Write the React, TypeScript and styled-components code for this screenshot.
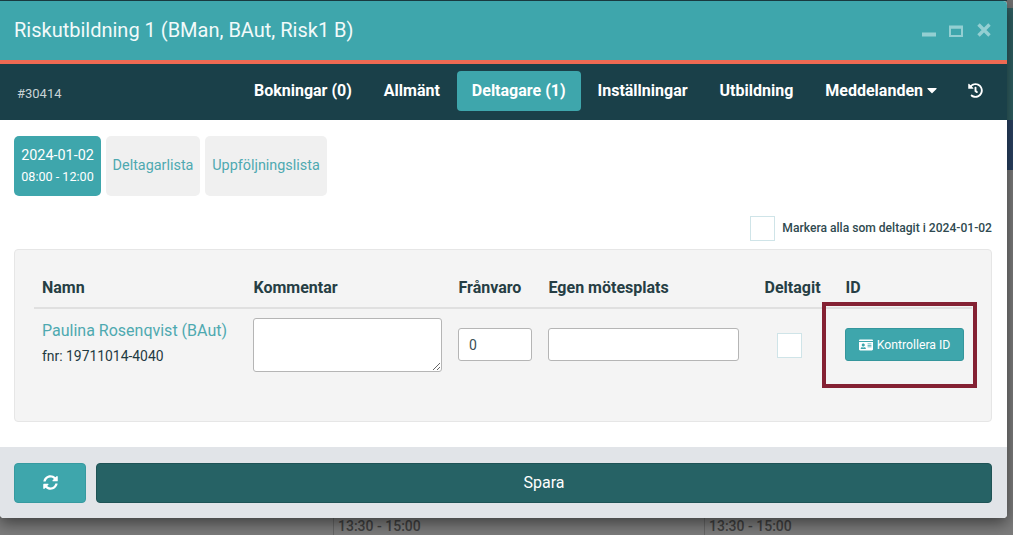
import React from "react";
import styled, { createGlobalStyle } from "styled-components";
import { FaCaretDown, FaHistory, FaIdCard, FaSyncAlt } from "react-icons/fa";

const Global = createGlobalStyle`
  html, body { margin: 0; padding: 0; height: 100%; overflow: hidden; }
  body { font-family: Roboto, "Liberation Sans", sans-serif; background: #787878; }
  * { box-sizing: border-box; }
`;

const Stage = styled.div`
  position: relative;
  width: 1013px;
  height: 535px;
  overflow: hidden;
  padding-top: 1px;
  background: linear-gradient(#1d4148 0, #1d4148 1px, #7c7c7c 1px);
`;

const SideStrip = styled.div<{ $top: number; $height: number; $color: string }>`
  position: absolute;
  right: 0;
  width: 6px;
  top: ${(p) => p.$top}px;
  height: ${(p) => p.$height}px;
  background: ${(p) => p.$color};
`;

const BackdropTime = styled.div<{ $left: number }>`
  position: absolute;
  left: ${(p) => p.$left}px;
  top: 517px;
  height: 18px;
  padding: 1px 0 0 4px;
  border-left: 1px solid #666;
  font-size: 14px;
  font-weight: 500;
  line-height: 16px;
  color: #404040;
`;

const Modal = styled.div`
  position: relative;
  width: 1007px;
  height: 517px;
  display: flex;
  flex-direction: column;
  border-radius: 0 4px 4px 4px;
  overflow: hidden;
  background: #fff;
  box-shadow: 0 5px 15px rgba(0, 0, 0, 0.5);
`;

const TitleBar = styled.header`
  height: 63px;
  flex: none;
  display: flex;
  align-items: center;
  justify-content: space-between;
  padding: 0 16px 1px 14px;
  background: #3ea6ac;
  border-bottom: 4px solid #ee6a53;
`;

const Title = styled.h1`
  margin: 0;
  font-size: 20px;
  font-weight: 400;
  line-height: 24px;
  color: #f2fafa;
`;

const WindowControls = styled.div`
  display: flex;
  align-items: flex-end;
  gap: 13px;
  svg { display: block; width: 14px; }
`;

const ControlIcon = styled.svg`
  fill: none;
  stroke: #93cfd2;
`;

const CloseIcon = styled(ControlIcon)`
  margin-left: 1px;
`;

const Nav = styled.nav`
  height: 56px;
  flex: none;
  display: flex;
  align-items: flex-start;
  padding: 7px 8px 0 17px;
  background: #1a4049;
`;

const CaseNumber = styled.span`
  margin-top: 15px;
  margin-right: auto;
  font-size: 13px;
  line-height: 15px;
  color: #c9d3d5;
`;

const NavItem = styled.a<{ $active?: boolean }>`
  height: 40px;
  display: flex;
  align-items: center;
  gap: 1px;
  margin: 0 ${(p) => (p.$active ? "1px" : "0")};
  padding: 0 ${(p) => (p.$active ? "15px" : "16px")} 2px;
  border-radius: 4px;
  font-size: 16px;
  font-weight: 700;
  line-height: 19px;
  color: #fff;
  background: ${(p) => (p.$active ? "#3ea6ac" : "transparent")};
  svg { display: block; }
`;

const Caret = styled(FaCaretDown)`
  margin-right: -4px;
`;

const Body = styled.main`
  flex: 1;
  display: flex;
  flex-direction: column;
  padding: 16px 15px 0 14px;
  background: #fff;
`;

const Tabs = styled.div`
  display: flex;
  gap: 5px;
`;

const Tab = styled.a<{ $active?: boolean; $width: number }>`
  width: ${(p) => p.$width}px;
  height: 60px;
  display: flex;
  flex-direction: column;
  align-items: center;
  justify-content: center;
  padding-bottom: ${(p) => (p.$active ? "0" : "2px")};
  border-radius: 5px;
  font-size: 14.4px;
  line-height: 21px;
  color: ${(p) => (p.$active ? "#fff" : "#4ea9b0")};
  background: ${(p) => (p.$active ? "#3ea6ac" : "#f0f0f0")};
`;

const TabTime = styled.span`
  font-size: 12.6px;
`;

const MarkRow = styled.div`
  height: 25px;
  margin-top: 20px;
  display: flex;
  align-items: center;
  justify-content: flex-end;
  gap: 7px;
  font-size: 12.1px;
  font-weight: 500;
  color: #2f4a50;
`;

const MarkLabel = styled.span`
  padding-bottom: 1px;
`;

const Check = styled.span`
  display: block;
  width: 25px;
  height: 25px;
  background: #fff;
  border: 1px solid #cfe4e8;
`;

const Panel = styled.section`
  height: 173px;
  margin-top: 8px;
  padding: 20px 19px 0;
  background: #f4f4f4;
  border: 1px solid #e6e6e6;
  border-radius: 4px;
`;

const TableGrid = styled.div`
  display: grid;
  grid-template-columns: 211px 205px 90px 216px 81px 135px;
`;

const HeadCell = styled.div`
  height: 39px;
  padding: 8px 8px 0 8.5px;
  border-bottom: 2px solid #e0e0e0;
  font-size: 16px;
  font-weight: 700;
  line-height: 19px;
  color: #263e44;
  &:first-child { padding-left: 8px; }
`;

const Cell = styled.div`
  padding: 9px 8px 0;
  min-height: 80px;
`;

const CenterCell = styled(Cell)`
  padding-top: 19px;
`;

const PersonName = styled.a`
  display: block;
  margin-top: 1px;
  font-size: 16px;
  line-height: 24px;
  color: #4ea9b0;
`;

const PersonId = styled.div`
  margin-top: 3px;
  font-size: 13.9px;
  line-height: 20px;
  color: #1f3a42;
`;

const Comment = styled.textarea`
  display: block;
  width: 189px;
  height: 54px;
  margin: 0;
  background: #fff;
  border: 1px solid #b5b5b5;
  border-radius: 3px;
  outline: none;
`;

const TextInput = styled.input<{ $width: number }>`
  display: block;
  width: ${(p) => p.$width}px;
  height: 33px;
  padding: 0 10px;
  background: #fff;
  border: 1px solid #b5b5b5;
  border-radius: 3px;
  font-family: inherit;
  font-size: 14px;
  color: #3a4f55;
  outline: none;
`;

const CheckCell = styled(CenterCell)`
  padding-left: 21px;
  padding-top: 24px;
`;

const IdButton = styled.button`
  width: 119px;
  height: 33px;
  display: flex;
  align-items: center;
  justify-content: center;
  gap: 4px;
  padding: 0;
  border: 1px solid #35969c;
  border-radius: 3px;
  background: #3ea6ac;
  color: #fff;
  font-family: inherit;
  font-size: 12.25px;
  font-weight: 400;
`;

const Annotation = styled.div`
  position: absolute;
  left: 822px;
  top: 302px;
  width: 155px;
  height: 86px;
  border: 4px solid #842133;
  pointer-events: none;
`;

const Footer = styled.footer`
  height: 71px;
  flex: none;
  display: flex;
  gap: 10px;
  padding: 16px 15px 0 14px;
  background: #e1e4e8;
`;

const FooterButton = styled.button<{ $dark?: boolean }>`
  height: 40px;
  flex: ${(p) => (p.$dark ? "1" : "0 0 72px")};
  display: flex;
  align-items: center;
  justify-content: center;
  padding: 0 0 2px;
  border: 1px solid ${(p) => (p.$dark ? "#1f5356" : "#369aa0")};
  border-radius: 4px;
  background: ${(p) => (p.$dark ? "#266265" : "#3ea6ac")};
  color: #fff;
  font-family: inherit;
  font-size: 16px;
`;

export default function App() {
  return (
    <Stage>
      <Global />
      <SideStrip $top={0} $height={8} $color="#6f6f6f" />
      <SideStrip $top={8} $height={112} $color="#2f5f62" />
      <SideStrip $top={120} $height={50} $color="#2a4263" />
      <BackdropTime $left={333}>13:30 - 15:00</BackdropTime>
      <BackdropTime $left={704}>13:30 - 15:00</BackdropTime>
      <Modal>
        <TitleBar>
          <Title>Riskutbildning 1 (BMan, BAut, Risk1 B)</Title>
          <WindowControls>
            <ControlIcon viewBox="0 0 14 5" height="5">
              <path d="M0 2.5H14" strokeWidth="4" />
            </ControlIcon>
            <ControlIcon viewBox="0 0 14 12" height="12">
              <path d="M1 2.5H13V11H1Z" strokeWidth="2" />
              <path d="M0 2H14" strokeWidth="3" />
            </ControlIcon>
            <CloseIcon viewBox="0 0 14 14" height="14">
              <path d="M1.5 1.5L12.5 12.5M12.5 1.5L1.5 12.5" strokeWidth="3.4" />
            </CloseIcon>
          </WindowControls>
        </TitleBar>
        <Nav>
          <CaseNumber>#30414</CaseNumber>
          <NavItem>Bokningar (0)</NavItem>
          <NavItem>Allmänt</NavItem>
          <NavItem $active>Deltagare (1)</NavItem>
          <NavItem>Inställningar</NavItem>
          <NavItem>Utbildning</NavItem>
          <NavItem>
            Meddelanden
            <Caret size={16} />
          </NavItem>
          <NavItem>
            <FaHistory size={15} />
          </NavItem>
        </Nav>
        <Body>
          <Tabs>
            <Tab $active $width={87}>
              <span>2024-01-02</span>
              <TabTime>08:00 - 12:00</TabTime>
            </Tab>
            <Tab $width={94}>Deltagarlista</Tab>
            <Tab $width={122}>Uppföljningslista</Tab>
          </Tabs>
          <MarkRow>
            <Check />
            <MarkLabel>Markera alla som deltagit i 2024-01-02</MarkLabel>
          </MarkRow>
          <Panel>
            <TableGrid>
              <HeadCell>Namn</HeadCell>
              <HeadCell>Kommentar</HeadCell>
              <HeadCell>Frånvaro</HeadCell>
              <HeadCell>Egen mötesplats</HeadCell>
              <HeadCell>Deltagit</HeadCell>
              <HeadCell>ID</HeadCell>
              <Cell>
                <PersonName>Paulina Rosenqvist (BAut)</PersonName>
                <PersonId>fnr: 19711014-4040</PersonId>
              </Cell>
              <Cell>
                <Comment />
              </Cell>
              <CenterCell>
                <TextInput $width={74} defaultValue="0" />
              </CenterCell>
              <CenterCell>
                <TextInput $width={191} />
              </CenterCell>
              <CheckCell>
                <Check />
              </CheckCell>
              <CenterCell>
                <IdButton>
                  <FaIdCard size={14} />
                  Kontrollera ID
                </IdButton>
              </CenterCell>
            </TableGrid>
          </Panel>
        </Body>
        <Footer>
          <FooterButton>
            <FaSyncAlt size={15} />
          </FooterButton>
          <FooterButton $dark>Spara</FooterButton>
        </Footer>
      </Modal>
      <Annotation />
    </Stage>
  );
}
